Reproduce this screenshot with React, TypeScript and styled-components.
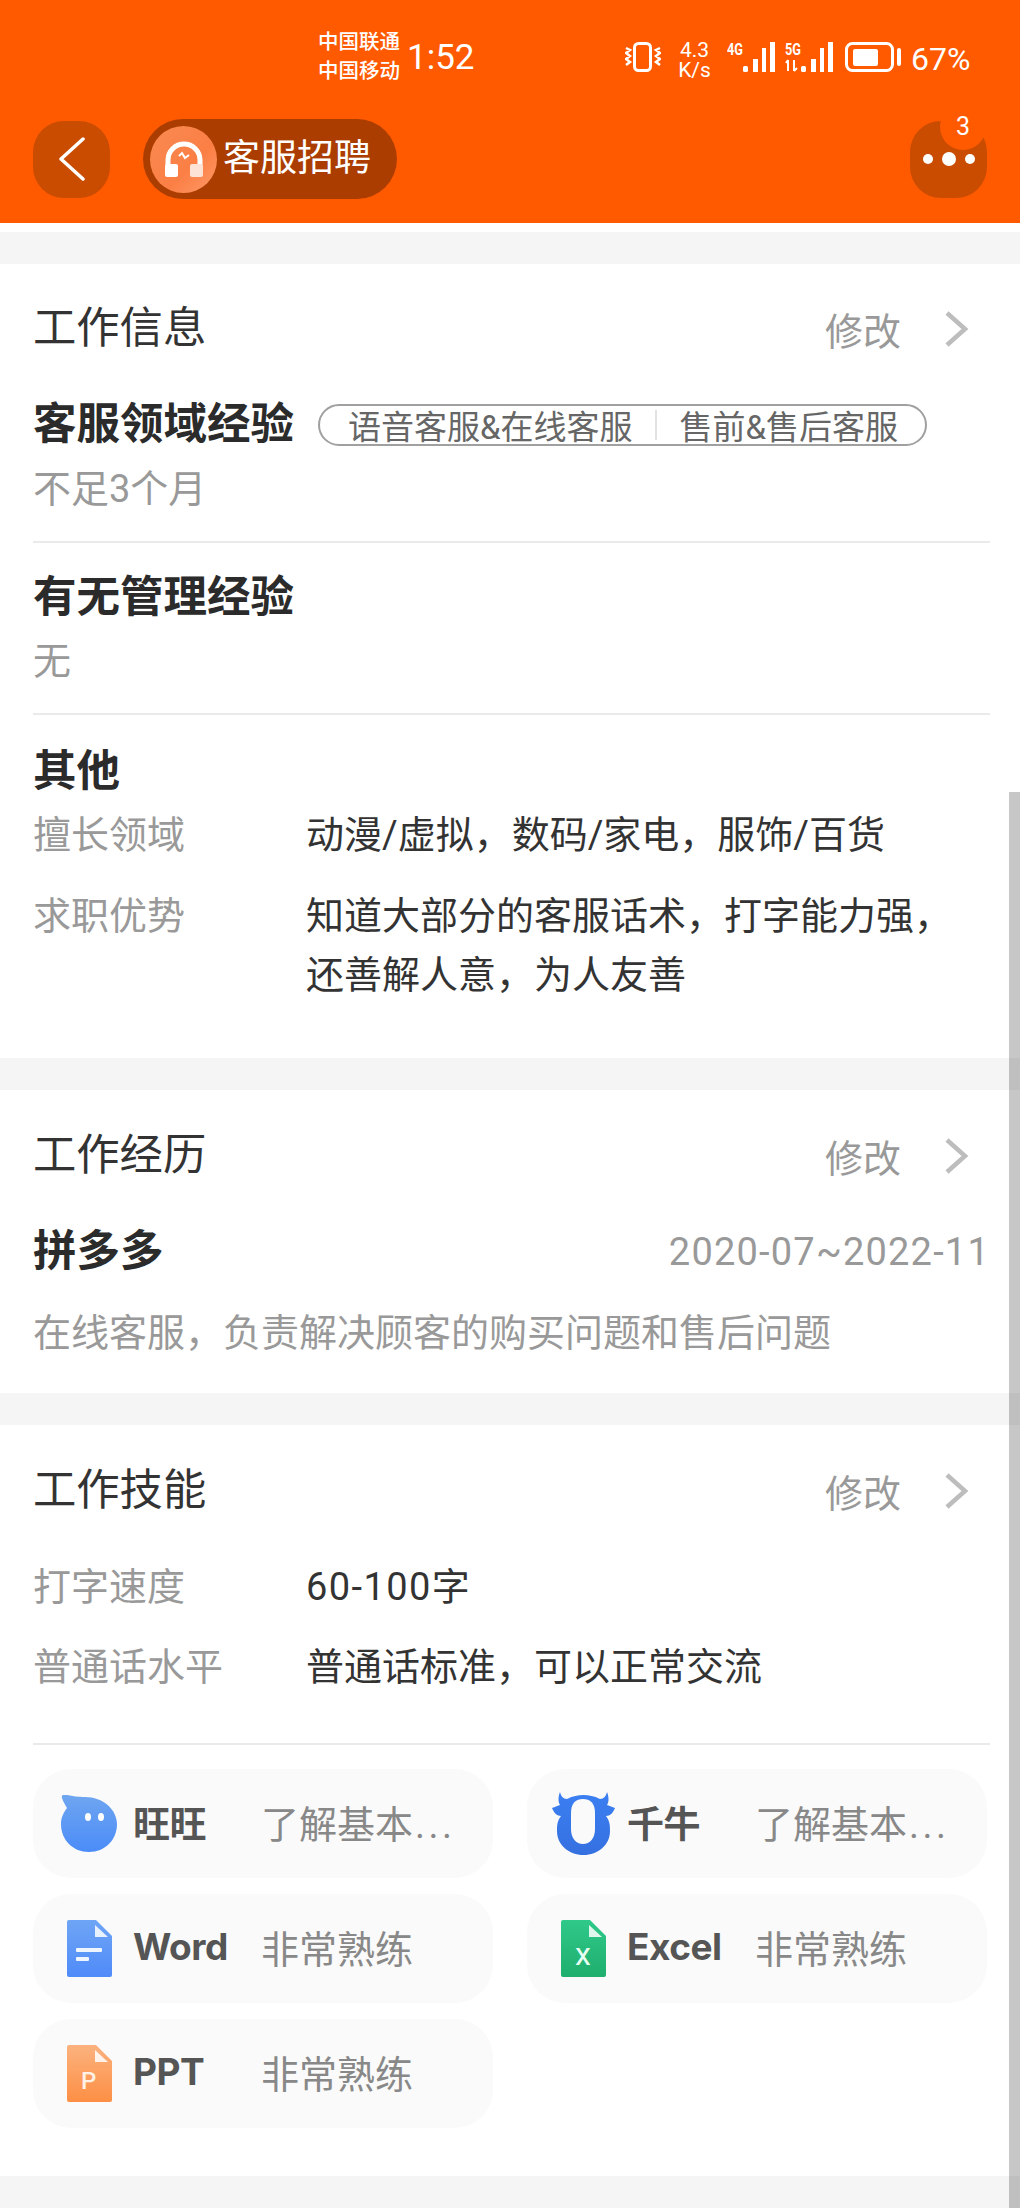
import type { ReactNode } from "react";
import styled, { createGlobalStyle } from "styled-components";

const GlobalStyle = createGlobalStyle`
  html, body {
    margin: 0;
    padding: 0;
    background: #f5f5f5;
  }
  body {
    font-family: "Roboto", "Noto Sans CJK SC", sans-serif;
  }
`;

const Page = styled.div`
  position: relative;
  width: 1020px;
  height: 2208px;
  overflow: hidden;
  background: #f5f5f5;
`;

const Header = styled.header`
  height: 223px;
  background: #ff5a00;
  color: #fff;
  box-sizing: border-box;
`;

const StatusBar = styled.div`
  height: 119px;
  box-sizing: border-box;
  padding: 28px 48px 0 318px;
  display: flex;
  align-items: flex-start;
`;

const Carrier = styled.div`
  width: 89px;
  font-size: 20.5px;
  line-height: 29px;
  font-weight: 500;
  white-space: nowrap;
`;

const Clock = styled.div`
  width: 218px;
  font-size: 35px;
  line-height: 60px;
`;

const StatusIcon = styled.svg`
  display: block;
  margin-top: 14px;
  flex: none;
`;

const SignalIcon = styled.svg`
  display: block;
  margin: 10px 10px 0 0;
  flex: none;
`;

const NetSpeed = styled.div`
  width: 33px;
  margin: 12px 16px 0 17px;
  font-size: 21px;
  line-height: 20px;
  text-align: center;
  white-space: nowrap;
`;

const Percent = styled.div`
  margin-left: 10px;
  font-size: 32px;
  line-height: 62px;
`;

const NavBar = styled.nav`
  display: flex;
  align-items: center;
  padding: 0 33px;
  height: 80px;
`;

const RoundButton = styled.div`
  position: relative;
  width: 77px;
  height: 77px;
  border-radius: 31px;
  background: #c94c00;
  display: flex;
  align-items: center;
  justify-content: center;
`;

const TitlePill = styled.div`
  margin-left: 33px;
  width: 254px;
  height: 80px;
  box-sizing: border-box;
  border-radius: 40px;
  background: #ab3d00;
  padding-left: 7px;
  display: flex;
  align-items: center;
`;

const PillIcon = styled.div`
  width: 67px;
  height: 67px;
  border-radius: 50%;
  background: linear-gradient(135deg, #f98a52, #fb7f45 60%, #ff9a68);
  display: flex;
  align-items: center;
  justify-content: center;
`;

const PillText = styled.div`
  margin-left: 6px;
  font-size: 37px;
  line-height: 80px;
  white-space: nowrap;
`;

const Spacer = styled.div`
  flex: 1;
`;

const Badge = styled.div`
  position: absolute;
  top: -17px;
  right: 1px;
  width: 46px;
  height: 46px;
  border-radius: 50%;
  background: #ff5a00;
  font-size: 25px;
  line-height: 46px;
  text-align: center;
`;

const Dots = styled.div`
  display: flex;
  align-items: center;
  gap: 9px;
  margin-top: -1px;
`;

const Dot = styled.span<{ $size: number }>`
  width: ${(p) => p.$size}px;
  height: ${(p) => p.$size}px;
  border-radius: 50%;
  background: #fff;
`;

const WhiteStrip = styled.div`
  height: 9px;
  background: #fff;
`;

const Card = styled.section<{ $height: number; $gap: number }>`
  height: ${(p) => p.$height}px;
  margin-top: ${(p) => p.$gap}px;
  box-sizing: border-box;
  background: #fff;
  padding: 0 30px 0 33px;
`;

const CardHead = styled.div<{ $height: number; $after?: number }>`
  height: ${(p) => p.$height}px;
  margin-bottom: ${(p) => p.$after || 0}px;
  display: flex;
  align-items: center;
`;

const CardTitle = styled.h2`
  margin: 0;
  flex: 1;
  font-size: 43.3px;
  line-height: 60px;
  font-weight: 400;
  color: #333;
`;

const EditText = styled.span`
  font-size: 38px;
  color: #999;
  margin: -1px 42px 0 0;
`;

const Chevron = styled.svg`
  display: block;
  margin-right: 21px;
`;

const LineHead = styled.div<{ $height: number; $top?: number }>`
  height: ${(p) => p.$height}px;
  box-sizing: border-box;
  padding-top: ${(p) => p.$top || 0}px;
  display: flex;
  align-items: center;
`;

const StrongLabel = styled.div`
  flex: 1;
  font-size: 43.5px;
  line-height: 60px;
  font-weight: 700;
  color: #2b2b2b;
  white-space: nowrap;
`;

const FixedLabel = styled(StrongLabel)`
  flex: none;
`;

const TagBox = styled.div`
  margin-left: 24px;
  width: 609px;
  height: 42px;
  box-sizing: border-box;
  border: 2px solid #a0a0a0;
  border-radius: 21px;
  display: flex;
  align-items: center;
  padding-left: 28px;
  font-size: 33px;
  color: #666;
  white-space: nowrap;
`;

const TagDivider = styled.span`
  width: 2px;
  height: 30px;
  margin: 0 23px 0 22px;
  background: #e2e2e2;
`;

const SubText = styled.div<{ $height: number; $top: number }>`
  height: ${(p) => p.$height}px;
  box-sizing: border-box;
  padding-top: ${(p) => p.$top}px;
  font-size: 38px;
  line-height: 50px;
  color: #999;
  white-space: nowrap;
`;

const Divider = styled.div`
  height: 2px;
  background: #eaeaea;
`;

const DateText = styled.div`
  font-size: 38px;
  letter-spacing: 1.2px;
  color: #999;
  white-space: nowrap;
`;

const InfoRow = styled.div<{ $height: number }>`
  display: flex;
  min-height: ${(p) => p.$height}px;
`;

const InfoLabel = styled.div`
  width: 273px;
  flex: none;
  font-size: 38px;
  line-height: 58px;
  color: #999;
`;

const InfoValue = styled.div`
  font-size: 38px;
  line-height: 59px;
  color: #333;
`;

const LatinRun = styled.span`
  letter-spacing: 1.4px;
`;

const ChipGrid = styled.div`
  display: grid;
  grid-template-columns: 460px 460px;
  column-gap: 34px;
  grid-auto-rows: 109px;
  row-gap: 16px;
  padding-top: 24px;
`;

const Chip = styled.div`
  display: flex;
  align-items: center;
  border-radius: 38px;
  background: #fafafa;
  padding-left: 24px;
`;

const ChipIcon = styled.div`
  width: 64px;
  flex: none;
  display: flex;
  justify-content: center;
`;

const ChipName = styled.div`
  width: 131px;
  margin-left: 12px;
  margin-top: -4px;
  flex: none;
  font-family: "Inter", "Noto Sans CJK SC", sans-serif;
  font-size: 37px;
  font-weight: 700;
  letter-spacing: -0.5px;
  color: #555;
  white-space: nowrap;
`;

const ChipValue = styled.div`
  margin-left: -3px;
  margin-top: -4px;
  font-size: 38px;
  color: #888;
  white-space: nowrap;
`;

const MoreDots = styled.span`
  margin-left: 2px;
  letter-spacing: 3.5px;
`;

const ScrollThumb = styled.div`
  position: absolute;
  right: 0;
  top: 792px;
  bottom: 0;
  width: 11px;
  background: rgba(0, 0, 0, 0.22);
`;

function Signal({ label, arrows }: { label: string; arrows?: boolean }) {
  return (
    <SignalIcon width="48" height="34" viewBox="0 -4 48 34">
      <text
        x="0"
        y="13"
        fontSize="16"
        fontWeight="700"
        fill="#fff"
        fontFamily="Roboto, sans-serif"
        textLength={16}
        lengthAdjust="spacingAndGlyphs"
      >
        {label}
      </text>
      {arrows && (
        <path d="M3 29V18M3 18l-2 3M9 18v11M9 29l3-3" stroke="#fff" strokeWidth="2" fill="none" />
      )}
      <rect x="16" y="24" width="5" height="6" rx="1.5" fill="#fff" />
      <rect x="26" y="17" width="5" height="13" fill="#fff" />
      <rect x="35" y="6" width="4" height="24" fill="#fff" />
      <rect x="43" y="0" width="5" height="30" fill="#fff" />
    </SignalIcon>
  );
}

function Arrow() {
  return (
    <Chevron width="26" height="38" viewBox="0 0 26 38">
      <path d="M4 3l18 16L4 35" fill="none" stroke="#bdbdbd" strokeWidth="4.5" />
    </Chevron>
  );
}

function DocIcon({ top, bottom, children }: { top: string; bottom: string; children: ReactNode }) {
  const id = "doc" + top.slice(1);
  return (
    <svg width="45" height="57" viewBox="0 0 45 57">
      <defs>
        <linearGradient id={id} x1="0" y1="0" x2="0" y2="1">
          <stop offset="0" stopColor={top} />
          <stop offset="1" stopColor={bottom} />
        </linearGradient>
      </defs>
      <path d="M2 0H29L45 16V55a2 2 0 0 1-2 2H2a2 2 0 0 1-2-2V2a2 2 0 0 1 2-2Z" fill={`url(#${id})`} />
      <path d="M28 5V17H41Z" fill="#fff" opacity="0.85" />
      {children}
    </svg>
  );
}

const WangIcon = () => (
  <svg width="56" height="57" viewBox="0 0 56 57">
    <defs>
      <linearGradient id="wang" x1="0" y1="0" x2="0" y2="1">
        <stop offset="0" stopColor="#6fa6f0" />
        <stop offset="1" stopColor="#4b8cf8" />
      </linearGradient>
    </defs>
    <path
      d="M1 3C0 0 3-1 6 0c6 1 11 2 16 2 19-1 34 12 34 27 0 16-12 28-28 28S0 45 0 29c0-7 3-12 6-16C4 10 2 6 1 3Z"
      fill="url(#wang)"
    />
    <ellipse cx="27" cy="22" rx="3" ry="4" fill="#fff" />
    <ellipse cx="40" cy="22" rx="3" ry="4" fill="#fff" />
  </svg>
);

const NiuIcon = () => (
  <svg width="63" height="65" viewBox="0 0 63 65">
    <defs>
      <linearGradient id="niu" x1="0" y1="0" x2="0" y2="1">
        <stop offset="0" stopColor="#3b7ff2" />
        <stop offset="1" stopColor="#3570e0" />
      </linearGradient>
    </defs>
    <path
      d="M8 1C9 5 11 8 15 8C21 5 26 4 31.5 4C37 4 42 5 48 8C52 8 54 5 55 1C57 6 57 11 55 14C58 15 60 16 63 17C61 22 58 25 54 25C58 30 58 35 58 40C58 54 46 64 31.5 64C17 64 5 54 5 40C5 35 5 30 9 25C5 25 2 22 0 17C3 16 5 15 8 14C6 11 6 6 8 1Z"
      fill="url(#niu)"
    />
    <path
      d="M31 8C38 8 43 12 43 22L43 38C43 47 38 53 31 53C24 53 19 47 19 38L19 22C19 12 24 8 31 8Z"
      fill="#fafafa"
    />
  </svg>
);

export default function App() {
  return (
    <Page>
      <GlobalStyle />
      <Header>
        <StatusBar>
          <Carrier>
            中国联通
            <br />
            中国移动
          </Carrier>
          <Clock>1:52</Clock>
          <StatusIcon width="36" height="30" viewBox="0 0 36 30">
            <rect x="9.5" y="1.5" width="16" height="27" rx="4" fill="none" stroke="#fff" strokeWidth="3" />
            <path
              d="M1 6l4 2-4 3 4 3-4 3 4 3-4 3M35 6l-4 2 4 3-4 3 4 3-4 3 4 3"
              fill="none"
              stroke="#fff"
              strokeWidth="2.5"
            />
          </StatusIcon>
          <NetSpeed>
            4.3
            <br />
            K/s
          </NetSpeed>
          <Signal label="4G" />
          <Signal label="5G" arrows />
          <StatusIcon width="56" height="30" viewBox="0 0 56 30" style={{ marginLeft: 2 }}>
            <rect x="1.5" y="1.5" width="46" height="27" rx="6" fill="none" stroke="#fff" strokeWidth="3" />
            <rect x="8" y="7" width="25" height="17" rx="2" fill="#fff" />
            <rect x="52" y="6" width="4" height="18" rx="2" fill="#fff" />
          </StatusIcon>
          <Percent>67%</Percent>
        </StatusBar>
        <NavBar>
          <RoundButton>
            <svg width="28" height="44" viewBox="0 0 28 44">
              <path d="M25 2L3 22l22 20" fill="none" stroke="#fff" strokeWidth="3.5" strokeLinecap="round" strokeLinejoin="round" />
            </svg>
          </RoundButton>
          <TitlePill>
            <PillIcon>
              <svg width="40" height="36" viewBox="0 0 40 36">
                <path d="M4 24V19a16 16 0 0 1 32 0v5" fill="none" stroke="#fff" strokeWidth="5" />
                <rect x="1" y="23" width="13" height="13" rx="2" fill="#fff" />
                <rect x="26" y="23" width="13" height="13" rx="2" fill="#fde3d6" />
                <path d="M15 15l3-3 3 5 4-3" fill="none" stroke="#fff" strokeWidth="2" />
              </svg>
            </PillIcon>
            <PillText>客服招聘</PillText>
          </TitlePill>
          <Spacer />
          <RoundButton>
            <Badge>3</Badge>
            <Dots>
              <Dot $size={10} />
              <Dot $size={14} />
              <Dot $size={10} />
            </Dots>
          </RoundButton>
        </NavBar>
      </Header>
      <WhiteStrip />

      <Card $height={794} $gap={32}>
        <CardHead $height={129}>
          <CardTitle>工作信息</CardTitle>
          <EditText>修改</EditText>
          <Arrow />
        </CardHead>
        <LineHead $height={64}>
          <FixedLabel>客服领域经验</FixedLabel>
          <TagBox>
            语音客服&amp;在线客服
            <TagDivider />
            售前&amp;售后客服
          </TagBox>
        </LineHead>
        <SubText $height={84} $top={7}>
          不足3个月
        </SubText>
        <Divider />
        <LineHead $height={85} $top={24}>
          <StrongLabel>有无管理经验</StrongLabel>
        </LineHead>
        <SubText $height={85} $top={8}>
          无
        </SubText>
        <Divider />
        <LineHead $height={91} $top={23}>
          <StrongLabel>其他</StrongLabel>
        </LineHead>
        <InfoRow $height={81}>
          <InfoLabel>擅长领域</InfoLabel>
          <InfoValue>动漫/虚拟，数码/家电，服饰/百货</InfoValue>
        </InfoRow>
        <InfoRow $height={118}>
          <InfoLabel>求职优势</InfoLabel>
          <InfoValue>
            知道大部分的客服话术，打字能力强，
            <br />
            还善解人意，为人友善
          </InfoValue>
        </InfoRow>
      </Card>

      <Card $height={303} $gap={32}>
        <CardHead $height={131}>
          <CardTitle>工作经历</CardTitle>
          <EditText>修改</EditText>
          <Arrow />
        </CardHead>
        <LineHead $height={62}>
          <StrongLabel>拼多多</StrongLabel>
          <DateText>2020-07~2022-11</DateText>
        </LineHead>
        <SubText $height={85} $top={25}>
          在线客服，负责解决顾客的购买问题和售后问题
        </SubText>
      </Card>

      <Card $height={751} $gap={32}>
        <CardHead $height={131} $after={2}>
          <CardTitle>工作技能</CardTitle>
          <EditText>修改</EditText>
          <Arrow />
        </CardHead>
        <InfoRow $height={80}>
          <InfoLabel>打字速度</InfoLabel>
          <InfoValue>
            <LatinRun>60-100</LatinRun>字
          </InfoValue>
        </InfoRow>
        <InfoRow $height={105}>
          <InfoLabel>普通话水平</InfoLabel>
          <InfoValue>普通话标准，可以正常交流</InfoValue>
        </InfoRow>
        <Divider />
        <ChipGrid>
          <Chip>
            <ChipIcon>
              <WangIcon />
            </ChipIcon>
            <ChipName>旺旺</ChipName>
            <ChipValue>
              了解基本<MoreDots>...</MoreDots>
            </ChipValue>
          </Chip>
          <Chip>
            <ChipIcon>
              <NiuIcon />
            </ChipIcon>
            <ChipName>千牛</ChipName>
            <ChipValue>
              了解基本<MoreDots>...</MoreDots>
            </ChipValue>
          </Chip>
          <Chip>
            <ChipIcon>
              <DocIcon top="#6fa5f5" bottom="#4f8bf9">
                <rect x="9" y="28" width="26" height="4" rx="1" fill="#fff" opacity="0.9" />
                <rect x="9" y="37" width="13" height="4" rx="1" fill="#fff" opacity="0.9" />
              </DocIcon>
            </ChipIcon>
            <ChipName>Word</ChipName>
            <ChipValue>非常熟练</ChipValue>
          </Chip>
          <Chip>
            <ChipIcon>
              <DocIcon top="#2fc98a" bottom="#1fae6d">
                <text x="14" y="45" fontSize="32" fontFamily="Roboto, sans-serif" fill="#e6fff2">
                  x
                </text>
              </DocIcon>
            </ChipIcon>
            <ChipName>Excel</ChipName>
            <ChipValue>非常熟练</ChipValue>
          </Chip>
          <Chip>
            <ChipIcon>
              <DocIcon top="#fbb27e" bottom="#fd8f45">
                <text x="14" y="44" fontSize="24" fontWeight="500" fontFamily="Roboto, sans-serif" fill="#fff1e6">
                  P
                </text>
              </DocIcon>
            </ChipIcon>
            <ChipName>PPT</ChipName>
            <ChipValue>非常熟练</ChipValue>
          </Chip>
        </ChipGrid>
      </Card>
      <ScrollThumb />
    </Page>
  );
}
